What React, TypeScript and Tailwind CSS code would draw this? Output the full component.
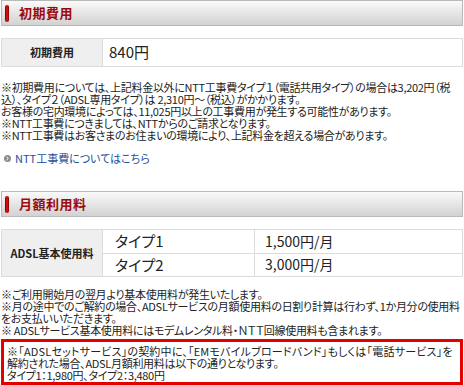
import React from "react";

const font = "font-['Noto_Sans_CJK_JP','Liberation_Sans',sans-serif] [font-feature-settings:'palt']";

function SectionHeader({ title }: { title: string }) {
  return (
    <div className="h-[26px] border border-[#b9b9b9] bg-gradient-to-b from-[#fafafa] to-[#d2d2d2] flex items-center pl-[3px]">
      <span className="w-[4px] h-[17px] rounded-[2px] bg-gradient-to-r from-[#7a0000] via-[#ee1111] to-[#7a0000]" />
      <span className="ml-[10px] text-[13px] font-bold text-[#9b0a0a] tracking-[0.5px]">{title}</span>
    </div>
  );
}

function Note({ children, className = "" }: { children: React.ReactNode; className?: string }) {
  return <p className={`whitespace-nowrap h-[12px] ${className}`}>{children}</p>;
}

function App() {
  return (
    <div className={`w-[464px] h-[385px] overflow-hidden bg-white pl-[1px] text-[#222] ${font}`}>
      <div className="w-[462px]">
        <SectionHeader title="初期費用" />

        <table className="mt-[12px] w-full border-collapse border border-[#cfcfcf]">
          <tbody>
            <tr className="h-[28px]">
              <th className="w-[101px] bg-[#efefef] border border-[#dcdcdc] text-[11px] font-bold">初期費用</th>
              <td className="border border-[#dcdcdc] pl-[6px] text-[15px]">840円</td>
            </tr>
          </tbody>
        </table>

        <div className="mt-[14px] text-[11px] leading-[12px] tracking-[-0.3px]">
          <Note>※初期費用については、上記料金以外にNTT工事費タイプ１（電話共用タイプ）の場合は3,202円（税</Note>
          <Note>込）、タイプ２（ADSL専用タイプ）は 2,310円～（税込）がかかります。</Note>
          <Note>お客様の宅内環境によっては、11,025円以上の工事費用が発生する可能性があります。</Note>
          <Note>※NTT工事費につきましては、NTTからのご請求となります。</Note>
          <Note>※NTT工事費はお客さまのお住まいの環境により、上記料金を超える場合があります。</Note>
        </div>

        <a href="#" className="mt-[11px] flex items-center h-[12px] text-[11px] text-[#1d4f9c]">
          <span className="ml-[3px] w-[7px] h-[7px] rounded-full bg-[#8c8c8c] flex items-center justify-center">
            <svg width="5" height="5" viewBox="0 0 5 5">
              <path d="M1.5 0.8 L3.3 2.5 L1.5 4.2" stroke="#fff" strokeWidth="1" fill="none" />
            </svg>
          </span>
          <span className="ml-[4px]">NTT工事費についてはこちら</span>
        </a>

        <div className="mt-[27px]">
          <SectionHeader title="月額利用料" />
        </div>

        <table className="mt-[12px] w-full border-collapse border border-[#cfcfcf]">
          <tbody>
            <tr className="h-[22px]">
              <th rowSpan={2} className="w-[101px] bg-[#efefef] border border-[#dcdcdc] text-[11px] font-bold">ADSL基本使用料</th>
              <td className="w-[152px] border border-[#dcdcdc] pl-[12px] text-[15px]">タイプ1</td>
              <td className="border border-[#dcdcdc] pl-[10px] text-[14px]">1,500円/月</td>
            </tr>
            <tr className="h-[23px]">
              <td className="border border-[#dcdcdc] pl-[12px] text-[15px]">タイプ2</td>
              <td className="border border-[#dcdcdc] pl-[10px] text-[14px]">3,000円/月</td>
            </tr>
          </tbody>
        </table>

        <div className="mt-[11px] text-[11px] leading-[12.4px] tracking-[-0.3px]">
          <Note>※ご利用開始月の翌月より基本使用料が発生いたします。</Note>
          <Note>※月の途中でのご解約の場合、ADSLサービスの月額使用料の日割り計算は行わず、1か月分の使用料</Note>
          <Note>をお支払いいただきます。</Note>
          <Note>※ ADSLサービス基本使用料にはモデムレンタル料・ＮＴＴ回線使用料も含まれます。</Note>
        </div>

        <div className="mt-[3px] border-[3px] border-[#e50000] pt-[3px] pb-[1px] pl-[3px] text-[11px] leading-[12.4px] tracking-[-0.3px]">
          <Note className="tracking-[0.2px]">※「ADSLセットサービス」の契約中に、「EMモバイルブロードバンド」もしくは「電話サービス」を</Note>
          <Note>解約された場合、ADSL月額利用料は以下の通りとなります。</Note>
          <Note>タイプ1：1,980円、タイプ2：3,480円</Note>
        </div>
      </div>
    </div>
  );
}

export default App;
